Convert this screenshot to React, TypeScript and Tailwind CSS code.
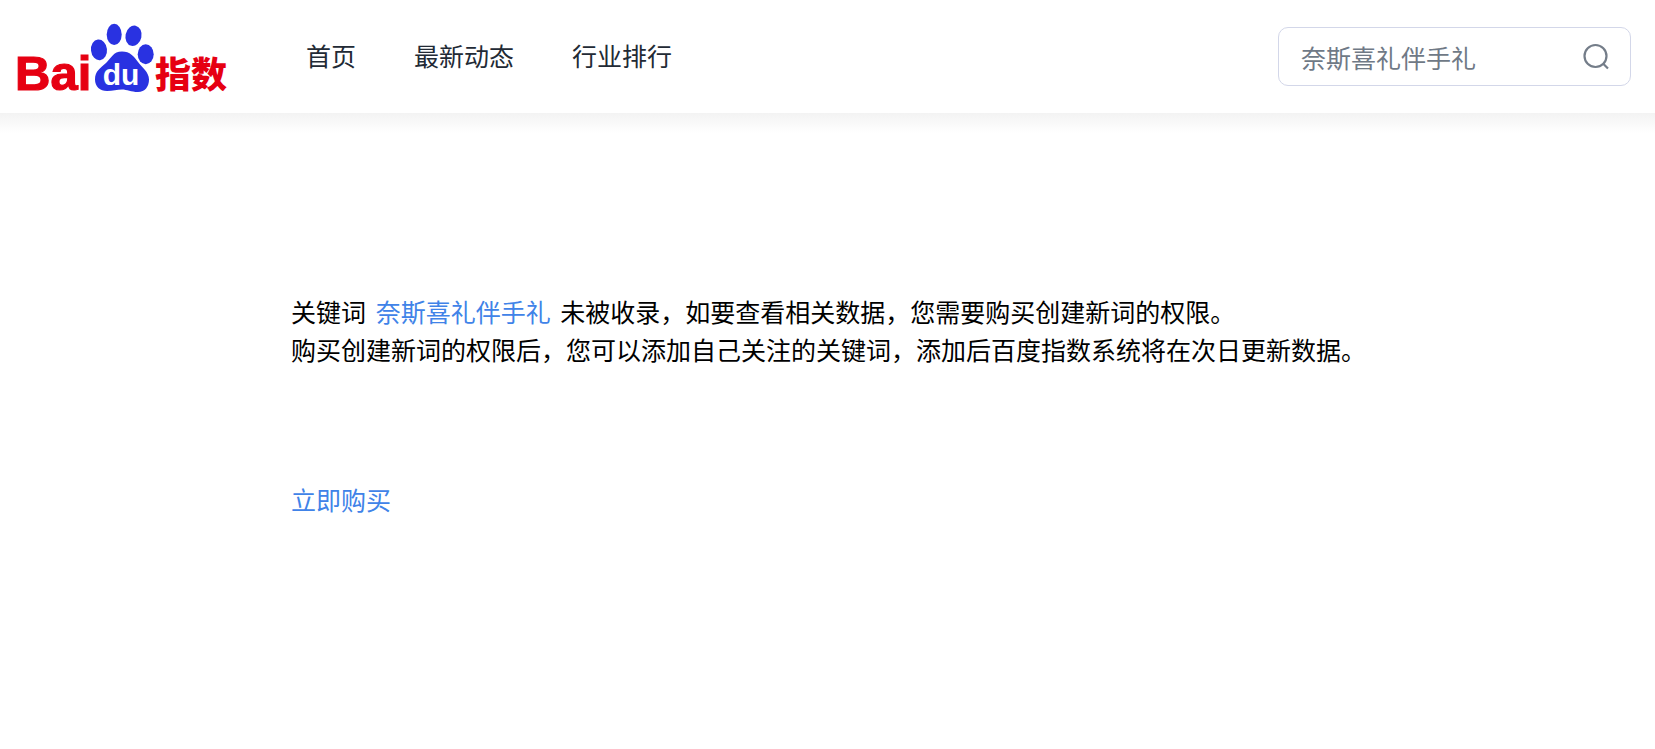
import { useState } from 'react';

const navItems = ['首页', '最新动态', '行业排行'];

function Logo() {
  return (
    <svg width="224" height="96" viewBox="9 9 224 96" role="img" aria-label="Baidu 指数">
      <g fill="#e60012">
        <text
          x="15"
          y="90"
          stroke="#e60012"
          strokeWidth="1.2"
          className="font-['Liberation_Sans'] text-[49px] leading-[49px] font-bold"
        >
          Bai
        </text>
        <text x="155" y="88" className="font-['Noto_Sans_CJK_SC'] text-[36px] leading-[36px] font-black">
          指数
        </text>
      </g>
      <g fill="#2932e1">
        <ellipse cx="99" cy="49.8" rx="8" ry="10.4" transform="rotate(-6 99 49.8)" />
        <ellipse cx="114.2" cy="34.4" rx="7.5" ry="10.6" />
        <ellipse cx="133.5" cy="35.8" rx="8" ry="10.3" transform="rotate(12 133.5 35.8)" />
        <ellipse cx="145.7" cy="54.3" rx="8" ry="10" />
        <path d="M122 51.5C113 51.5 111.500 58 106 63C100.500 68 95 71 95 79.500C95 86.500 100 91 107 91C113 91 117 89.500 122 89.500C127 89.500 131 92 138 92C145 92 149 86.500 149 79.500C149 72 142 67.500 138 62C134 56.500 130 51.500 122 51.500Z" />
      </g>
      <text
        x="121"
        y="85"
        textAnchor="middle"
        fill="#fff"
        className="font-['Liberation_Sans'] text-[30px] leading-[30px] font-bold"
      >
        du
      </text>
    </svg>
  );
}

function SearchBox() {
  const [keyword, setKeyword] = useState('奈斯喜礼伴手礼');
  return (
    <form
      role="search"
      onSubmit={(event) => event.preventDefault()}
      className="ml-auto flex h-[59px] w-[353px] items-center rounded-[10px] border border-[#d3d7e9] pr-5 pl-[22px]"
    >
      <input
        type="text"
        aria-label="搜索关键词"
        value={keyword}
        onChange={(event) => setKeyword(event.target.value)}
        className="min-w-0 flex-1 bg-transparent text-[#6f7986] outline-none"
      />
      <button type="submit" aria-label="搜索" className="shrink-0">
        <svg width="28" height="28" viewBox="0 0 28 28" fill="none" stroke="#747d89" strokeWidth="2.2">
          <circle cx="13.5" cy="13" r="11" />
          <path d="M21 20.500L26 25.500" />
        </svg>
      </button>
    </form>
  );
}

export default function App() {
  return (
    <div className="min-h-screen bg-white font-['Noto_Sans_CJK_SC',sans-serif] text-[25px] leading-[38px] font-normal text-black">
      <header className="flex h-[113px] items-center bg-white pr-6 pl-[9px]">
        <a href="#home" className="shrink-0">
          <Logo />
        </a>
        <nav className="ml-[73px] flex gap-[58px] pb-1 text-[#222a35]">
          {navItems.map((item) => (
            <a key={item} href={`#${item}`}>
              {item}
            </a>
          ))}
        </nav>
        <SearchBox />
      </header>
      <div className="h-5 bg-gradient-to-b from-[#f3f3f3] to-white" />
      <main className="px-[291px] pt-[159px]">
        <p className="whitespace-nowrap">
          关键词{' '}
          <a href="#keyword" className="mx-1 text-[#4083e8]">
            奈斯喜礼伴手礼
          </a>{' '}
          未被收录，如要查看相关数据，您需要购买创建新词的权限。
        </p>
        <p className="whitespace-nowrap">
          购买创建新词的权限后，您可以添加自己关注的关键词，添加后百度指数系统将在次日更新数据。
        </p>
        <a href="#buy" className="mt-[112px] inline-block text-[#4083e8]">
          立即购买
        </a>
      </main>
    </div>
  );
}
